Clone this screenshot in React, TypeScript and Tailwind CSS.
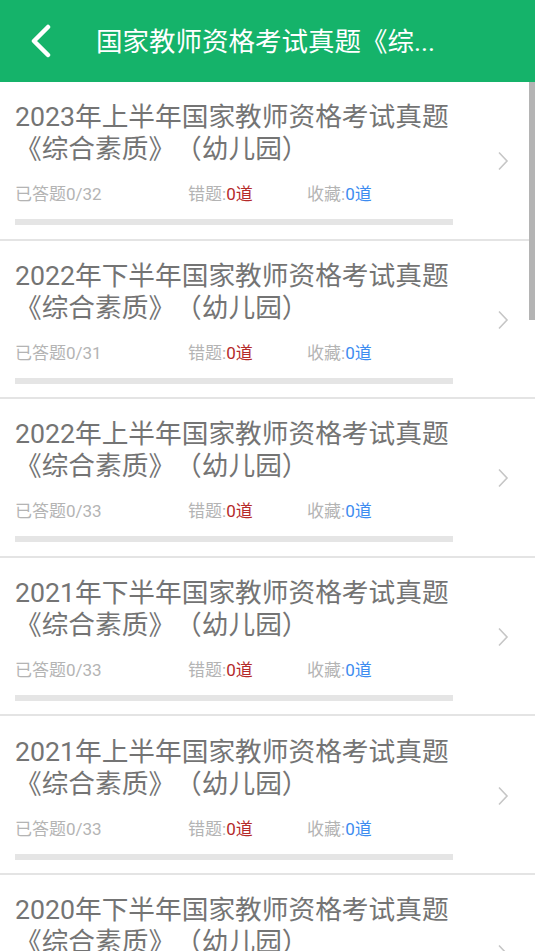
const items = [
  { year: '2023年上半年', done: '0/32' },
  { year: '2022年下半年', done: '0/31' },
  { year: '2022年上半年', done: '0/33' },
  { year: '2021年下半年', done: '0/33' },
  { year: '2021年上半年', done: '0/33' },
  { year: '2020年下半年', done: '0/33' },
];

const font = "font-['Roboto','Noto_Sans_CJK_SC',sans-serif] [text-spacing-trim:space-all]";

function Chevron() {
  return (
    <svg width="12" height="20" viewBox="0 0 12 20" fill="none">
      <path d="M2 1.5 L10 10 L2 18.5" stroke="#c6c6c6" strokeWidth="1.6" />
    </svg>
  );
}

export default function App() {
  return (
    <div className={`relative h-[951px] w-[535px] overflow-hidden bg-white ${font}`}>
      <header className="flex h-[82px] items-center bg-[#15b36a]">
        <div className="flex w-[96px] items-center pl-[30px]">
          <svg width="22" height="34" viewBox="0 0 22 34" fill="none">
            <path d="M18 3 L4 17 L18 31" stroke="white" strokeWidth="4.5" strokeLinecap="round" strokeLinejoin="round" />
          </svg>
        </div>
        <h1 className="pt-[2px] text-[26.5px] leading-none text-white">国家教师资格考试真题《综...</h1>
      </header>

      <div>
        {items.map((it) => (
          <div key={it.year} className="flex h-[158.6px] items-center border-b-2 border-[#e4e4e4]">
            <div className="flex-1 pl-[15px] pt-[6px]">
              <div className="text-[26.7px] leading-[32px] text-[#747474]">
                <div>{it.year}国家教师资格考试真题</div>
                <div>《综合素质》（幼儿园）</div>
              </div>
              <div className="mt-[18px] flex text-[17px] leading-[22px] text-[#b4b4b4]">
                <span className="w-[173px]">已答题{it.done}</span>
                <span className="w-[119px]">
                  错题:<span className="text-[#b52a2a]">0道</span>
                </span>
                <span>
                  收藏:<span className="text-[#3d8cf0]">0道</span>
                </span>
              </div>
              <div className="mt-[14px] h-[6px] w-[438px] bg-[#e5e5e5]" />
            </div>
            <div className="pr-[26px] pt-[2px]">
              <Chevron />
            </div>
          </div>
        ))}
      </div>

      <div className="absolute right-0 top-[82px] h-[238px] w-[6px] bg-[#b4b4b4]" />
    </div>
  );
}
